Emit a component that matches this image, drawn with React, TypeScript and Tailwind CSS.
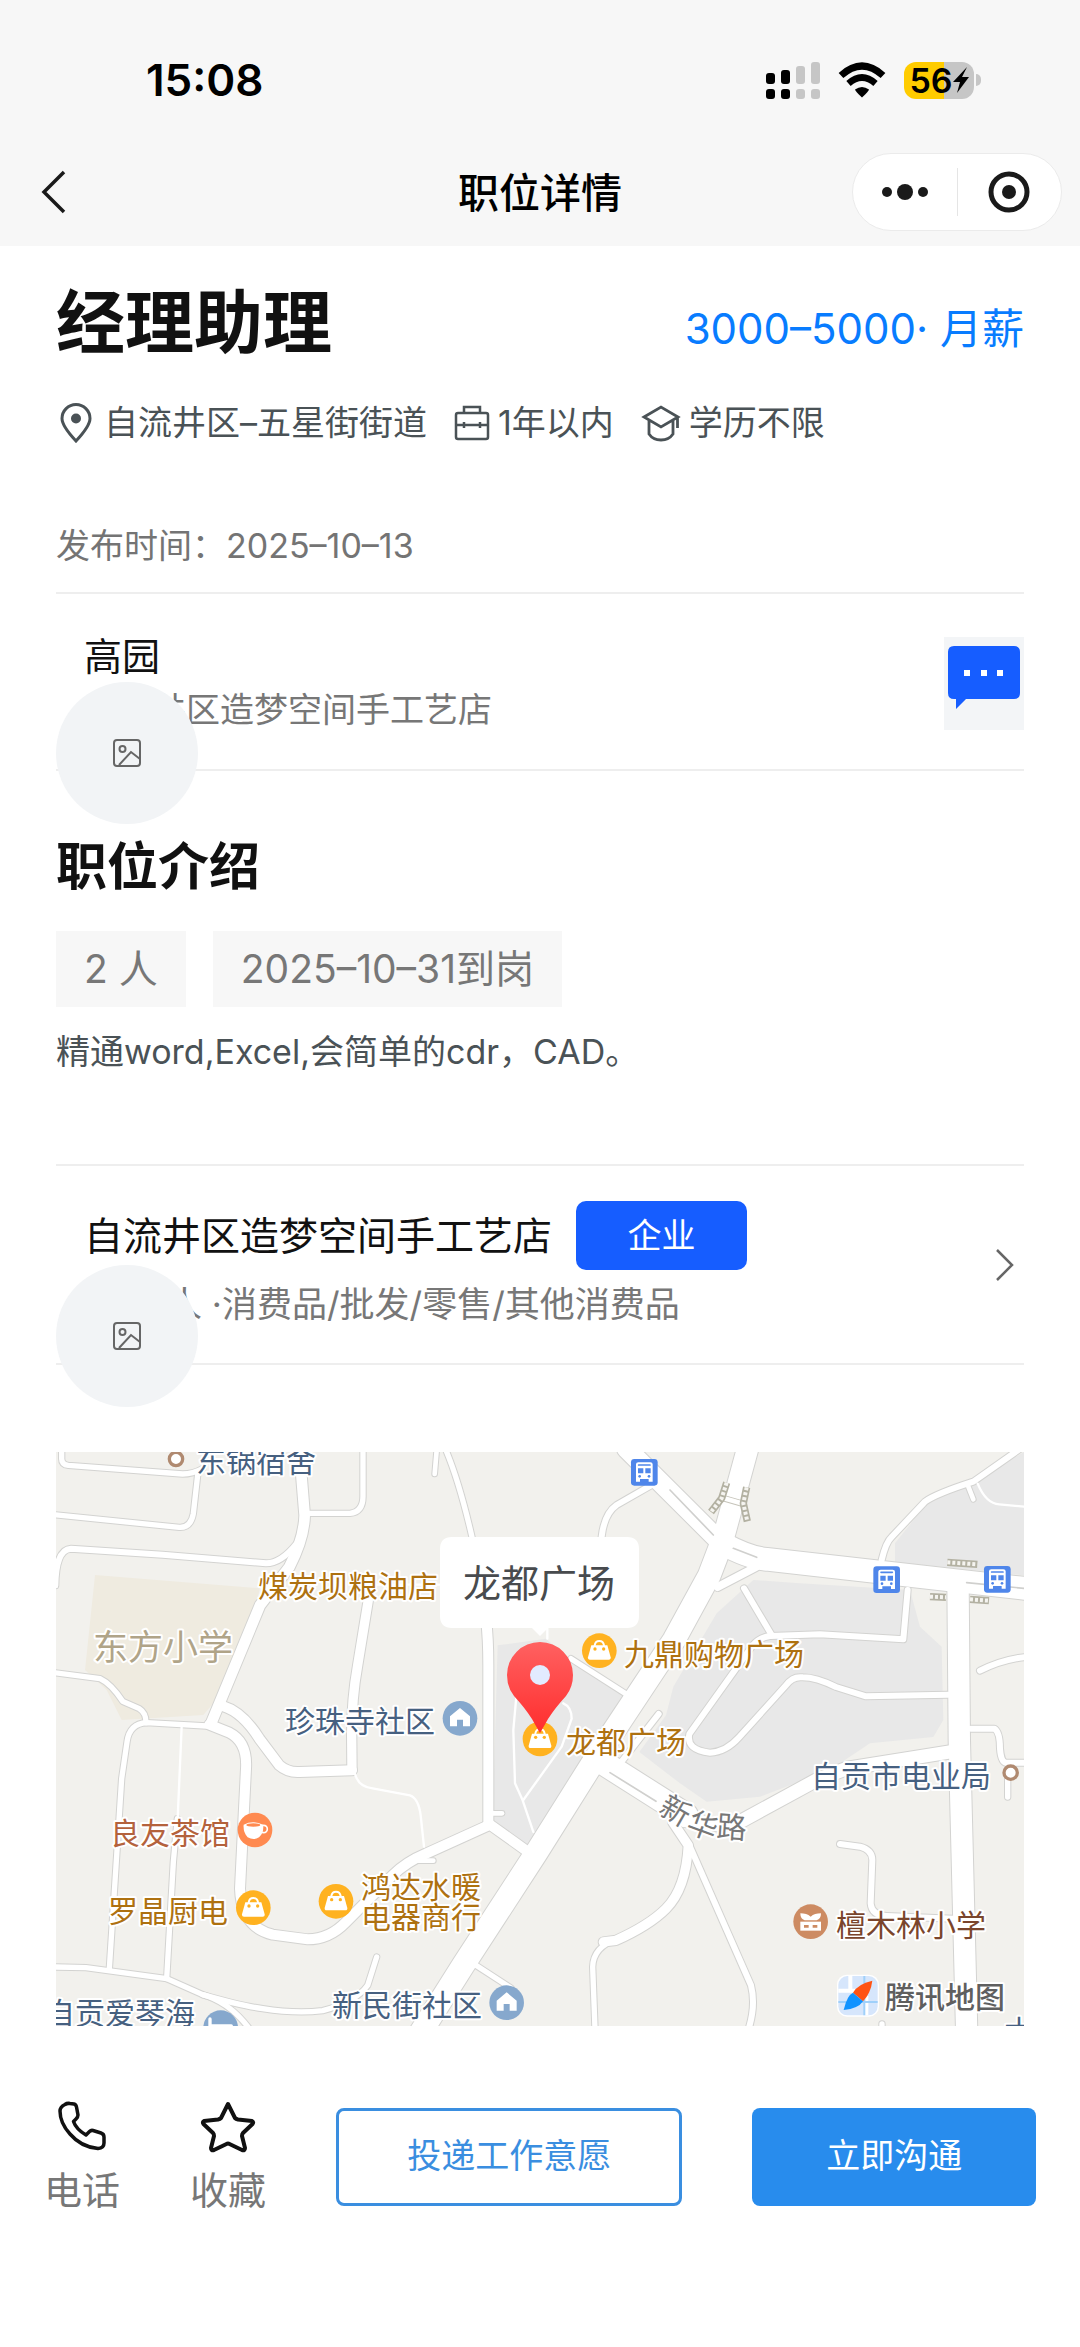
import type { ReactNode } from 'react';

type PoiKind = 'bag' | 'house' | 'tea' | 'school' | 'bed';

interface MapLabel {
  text: string;
  x: number;
  y: number;
  color: string;
  size?: number;
}

const ROADS: { d: string; width: number }[] = [
  { d: 'M17-5V20Q17 38 37 40L380 66Q410 66 440 50', width: 16 },
  { d: 'M426 60L412 185Q404 228 370 226L-5 188', width: 16 },
  { d: 'M-2 400Q0 292 45 290L320 308L630 334Q675 334 722 275', width: 18 },
  { d: 'M730-5L746 190Q744 260 700 345L612 460L465 815', width: 32 },
  { d: 'M762 184H882Q922 180 921 130V-5', width: 16 },
  { d: 'M1142-5L1136 66', width: 14 },
  { d: 'M1170-5Q1210 90 1248 255L1290 520', width: 16 },
  { d: 'M1290 500Q1297 560 1297 640V1120', width: 30 },
  { d: 'M937 444L905 640Q887 740 887 850L888 955', width: 28 },
  { d: 'M-5 662L132 680Q165 695 200 748L250 770Q270 782 270 812', width: 16 },
  { d: 'M452 822L272 812Q220 815 213 870L197 980L160 1550', width: 16 },
  { d: 'M364 1100L352 1230L332 1580', width: 16 },
  {
    d: 'M460 818L520 842Q575 870 570 950L552 1310Q556 1425 650 1448L755 1462Q820 1462 870 1410L1010 1270Q1050 1230 1110 1205L1302 1118L1410 1195',
    width: 30,
  },
  { d: 'M500 762Q560 780 610 860L670 940Q695 962 730 960L888 955', width: 30 },
  { d: 'M1302 1084H1338', width: 14 },
  { d: 'M1085 1226H1132', width: 14 },
  {
    d: 'M-5 1545L90 1547L332 1580L440 1628Q560 1662 620 1670Q720 1686 800 1676Q900 1650 935 1600L962 1515',
    width: 16,
  },
  { d: 'M440 1628Q520 1650 580 1730', width: 16 },
  { d: 'M2075-10L2000 265', width: 64 },
  { d: 'M2000 265L1960 370L1854 564L1622 914L1440 1204L1222 1539L1095 1740', width: 68 },
  { d: 'M1712-10L1985 262', width: 58 },
  { d: 'M2000 275Q2080 318 2132 322L2682 384L2915 410', width: 68 },
  { d: 'M2100 345L1985 405', width: 24 },
  { d: 'M2477 324Q2490 270 2507 255L2607 149Q2640 125 2752 89L2890-8', width: 18 },
  { d: 'M2737 104L2752 142', width: 14 },
  { d: 'M1785 100L1682 159Q1645 185 1637 254', width: 18 },
  { d: 'M2706 390L2710 865L2732 1735', width: 64 },
  { d: 'M2064 409L2147 549', width: 18 },
  {
    d: 'M2555 414L2542 562L2292 547L2142 552Q2110 556 2090 580L1900 846Q1890 895 1962 902Q2010 900 2050 855L2190 700Q2210 672 2240 676Q2280 676 2340 705L2430 733L2675 728',
    width: 18,
  },
  { d: 'M2772 656Q2840 622 2910 615', width: 18 },
  { d: 'M1545 620L1707 724', width: 16 },
  { d: 'M1808 786L1692 935', width: 18 },
  { d: 'M2745 830H2815Q2832 840 2832 890Q2835 930 2850 932H2910', width: 18 },
  { d: 'M2855 984V1035', width: 16 },
  { d: 'M1630 925L1890 1090', width: 72 },
  { d: 'M1880 1085Q1980 1140 2060 1105L2280 985L2370 950L2680 900', width: 40 },
  { d: 'M1850 1110L1897 1180Q1890 1310 1830 1370Q1780 1420 1680 1465L1642 1470', width: 28 },
  { d: 'M1682 1462Q1612 1485 1610 1545L1617 1730', width: 16 },
  { d: 'M1902 1184L2085 1600Q2100 1660 2078 1730', width: 18 },
  {
    d: 'M2352 1176L2412 1184Q2449 1194 2449 1224L2444 1354Q2447 1390 2492 1392L2692 1400',
    width: 18,
  },
  { d: 'M1260 1540L1365 1608', width: 16 },
  { d: 'M2478 1730V1716', width: 16 },
];

const FOOTPATHS = [
  'M377 824L365 1100',
  'M960 398H1150',
  'M897 965Q907 1005 950 1009L1062 1030Q1088 1040 1094 1090L1104 1184',
  'M2765 95Q2790 155 2830 157L2904 164',
  'M1474 500V560',
  'M1384 700L1372 834L1377 994L1400 1045L1432 1140',
  'M1522 754Q1547 765 1547 800L1517 884L1402 1044',
];

const FOOTBRIDGES = [
  'M2012 92L1997 139L1965 180',
  'M2072 106L2062 154L2074 208',
  'M2674 331L2764 337',
  'M2622 434L2670 436',
  'M2742 442L2799 446',
];

const POIS: { kind: PoiKind; x: number; y: number }[] = [
  { kind: 'house', x: 1212, y: 799 },
  { kind: 'house', x: 1352, y: 1652 },
  { kind: 'bed', x: 494, y: 1727 },
  { kind: 'bag', x: 1630, y: 596 },
  { kind: 'bag', x: 1452, y: 861 },
  { kind: 'bag', x: 592, y: 1367 },
  { kind: 'bag', x: 840, y: 1348 },
  { kind: 'tea', x: 597, y: 1134 },
  { kind: 'school', x: 2264, y: 1409 },
];

const POI_COLORS: Record<PoiKind, string> = {
  bag: '#ffb220',
  house: '#86a8cd',
  bed: '#86a8cd',
  tea: '#ff8a50',
  school: '#cd8b62',
};

const BUS_STOPS = [
  { x: 1765, y: 61 },
  { x: 2492, y: 383 },
  { x: 2824, y: 382 },
];

const LABELS: MapLabel[] = [
  { text: '东锅宿舍', x: 140, y: 20, color: '#466080' },
  { text: '煤炭坝粮油店', x: 202, y: 145, color: '#ae7110' },
  { text: '东方小学', x: 37, y: 208, color: '#b0a488', size: 35 },
  { text: '珍珠寺社区', x: 229, y: 280, color: '#466080' },
  { text: '九鼎购物广场', x: 568, y: 213, color: '#ae7110' },
  { text: '龙都广场', x: 510, y: 301, color: '#ae7110' },
  { text: '自贡市电业局', x: 755, y: 335, color: '#466080' },
  { text: '良友茶馆', x: 54, y: 392, color: '#b4623c' },
  { text: '罗晶厨电', x: 52, y: 470, color: '#ae7110' },
  { text: '鸿达水暖', x: 305, y: 446, color: '#ae7110' },
  { text: '电器商行', x: 305, y: 476, color: '#ae7110' },
  { text: '新民街社区', x: 276, y: 564, color: '#466080' },
  { text: '自贡爱琴海', x: -11, y: 572, color: '#466080' },
  { text: '檀木林小学', x: 780, y: 484, color: '#7a452c' },
  { text: '木', x: 948, y: 590, color: '#466080' },
];

function PoiGlyph({ kind }: { kind: PoiKind }) {
  if (kind === 'bag') {
    return (
      <>
        <path d="M-24-16H24L34 20Q35 27 28 27H-28Q-35 27-34 20Z" fill="#fff" />
        <path d="M-14-16Q-12-29 0-29T14-16" fill="none" stroke="#fff" strokeWidth="6" />
        <circle cx="-13" cy="-5" r="5" fill="#ffb220" />
        <circle cx="13" cy="-5" r="5" fill="#ffb220" />
      </>
    );
  }
  if (kind === 'house') {
    return <path d="M0-31L30-6V24H9V4H-9V24H-30V-6Z" fill="#fff" />;
  }
  if (kind === 'bed') {
    return <path d="M-32-26V20M-32-5H32V10" fill="none" stroke="#fff" strokeWidth="10" />;
  }
  if (kind === 'tea') {
    return (
      <>
        <path d="M-34-16Q-6-30 24-16Q28 8 12 22Q-4 32-22 22Q-36 8-34-16Z" fill="#fff" />
        <circle cx="26" cy="-3" r="11" fill="none" stroke="#fff" strokeWidth="5" />
        <ellipse cx="-5" cy="-15" rx="21" ry="5" fill="#ff8a50" />
      </>
    );
  }
  return (
    <>
      <path d="M-31-25Q-12-25 0-15Q12-25 31-25Q31-8 18-4H-18Q-31-8-31-25Z" fill="#fff" />
      <path d="M-31 0H31V27H-31Z" fill="#fff" />
      <path d="M-20 10H-6V18H-20ZM6 10H20V18H6Z" fill="#cd8b62" />
    </>
  );
}

function LocationMap() {
  return (
    <svg viewBox="0 0 968 574" role="img" aria-label="龙都广场" className="mt-[87px] block w-full">
      <defs>
        <linearGradient id="pin-fill" x1="0" y1="0" x2="0" y2="1">
          <stop offset="0" stopColor="#ff6161" />
          <stop offset="1" stopColor="#ff2d2d" />
        </linearGradient>
      </defs>
      <rect width="968" height="574" fill="#f2f1ed" />

      <g transform="scale(.33333)" strokeLinecap="round" strokeLinejoin="round" fill="none">
        <path d="M117 369L612 409L592 484L472 754L442 789L197 804L152 714L87 654Z" fill="#efebe0" />
        <g fill="#e8e8e8">
          <path d="M1325 580L1470 560L1545 625L1705 735L1600 900L1435 1150L1410 1190L1310 1100Z" />
          <path d="M1982 484L2092 384L2232 394L2562 414L2592 524L2657 584L2662 804L2632 855L2442 874L2322 954L2112 1034L1952 1049L1872 994L1750 900L1830 790L1852 704Z" />
          <path d="M2517 274L2612 154L2752 89L2904 0V370L2517 330Z" />
        </g>
        {ROADS.map(({ d, width }) => (
          <path key={d} d={d} stroke="#d3d3d1" strokeWidth={width + 6} />
        ))}
        {FOOTPATHS.map((d) => (
          <path key={d} d={d} stroke="#fff" strokeWidth="7" />
        ))}
        {ROADS.map(({ d, width }) => (
          <path key={d} d={d} stroke="#fff" strokeWidth={width} />
        ))}
        <path
          d="M1842 114L1972 249M2032 289L2102 316M2732 392L2904 409M1662 962L1800 1048"
          stroke="#d0d0ce"
          strokeWidth="5"
        />
        <path d="M2004 139L2056 154" stroke="#c6c4ba" strokeWidth="20" />
        <path d="M2004 139L2056 154" stroke="#fff" strokeWidth="14" />
        <g strokeLinecap="butt">
          {FOOTBRIDGES.map((d) => (
            <path key={d} d={d} stroke="#b3b1a2" strokeWidth="22" />
          ))}
          {FOOTBRIDGES.map((d) => (
            <path key={d} d={d} stroke="#f5f4f0" strokeWidth="12" strokeDasharray="9 6" />
          ))}
        </g>

        <g fill="#fff" stroke="#b08a70" strokeWidth="10">
          <circle cx="360" cy="21" r="20" />
          <circle cx="2864" cy="962" r="20" />
        </g>
        {BUS_STOPS.map(({ x, y }) => (
          <g key={x} transform={`translate(${x} ${y})`}>
            <rect x="-40" y="-40" width="80" height="80" rx="10" fill="#4f86ea" />
            <path
              d="M-25 28V-24Q-25-30-18-30H18Q25-30 25-24V28H13V20H-13V28Z"
              fill="#fff"
            />
            <path d="M-17-22H17" stroke="#4f86ea" strokeWidth="5" />
            <path d="M-19-12H-3V3H-19ZM3-12H19V3H3Z" fill="#4f86ea" />
            <circle cx="-14" cy="12" r="4" fill="#4f86ea" />
            <circle cx="14" cy="12" r="4" fill="#4f86ea" />
          </g>
        ))}
        {POIS.map(({ kind, x, y }) => (
          <g key={`${x}-${y}`} transform={`translate(${x} ${y})`}>
            <circle r="52" fill={POI_COLORS[kind]} />
            <PoiGlyph kind={kind} />
          </g>
        ))}

        <g transform="translate(2347 1572)">
          <rect x="-4" y="-4" width="126" height="126" rx="30" fill="#fff" />
          <rect width="118" height="118" rx="27" fill="#d6e6fc" />
          <path d="M36 0V50M0 44H60M84 60V118" stroke="#fff" strokeWidth="12" strokeLinecap="butt" />
          <path d="M78 0V118M0 78H118" stroke="#9fd0fa" strokeWidth="6" strokeLinecap="butt" />
          <path d="M102 14Q58 24 44 50L74 76Q98 50 102 14Z" fill="#ff5314" />
          <path d="M16 102Q26 58 44 50L74 76Q60 98 16 102Z" fill="#1193ff" />
        </g>
      </g>

      <g
        stroke="#fff"
        strokeWidth="4"
        strokeLinejoin="round"
        paintOrder="stroke"
        fontSize="30"
      >
        {LABELS.map(({ text, x, y, color, size }) => (
          <text key={text} x={x} y={y} fill={color} fontSize={size}>
            {text}
          </text>
        ))}
        <g fill="#777" textAnchor="middle">
          <text transform="translate(614 368) rotate(30)">新</text>
          <text transform="translate(643 384) rotate(20)">华</text>
          <text transform="translate(675 386) rotate(4)">路</text>
        </g>
        <text x="829" y="556" fill="#5f5f5f" fontWeight="500">
          腾讯地图
        </text>
      </g>

      <path
        d="M396 85H571Q583 85 583 97V164Q583 176 571 176H492L484 184L476 176H396Q384 176 384 164V97Q384 85 396 85Z"
        fill="#fff"
      />
      <text x="483" y="145" textAnchor="middle" fontSize="38" fill="#484b4e">
        龙都广场
      </text>
      <path
        d="M484 281Q481 276 476 267Q469 256 458 244Q451 235 451 223A33 33 0 0 1 517 223Q517 235 510 244Q499 256 492 267Q487 276 484 281Z"
        fill="url(#pin-fill)"
      />
      <circle cx="484" cy="223" r="10" fill="#e2ebff" />
    </svg>
  );
}

function StatusBar() {
  return (
    <div className="flex h-[138px] items-center justify-between pt-[22px] pr-[99px] pl-[146px]">
      <span className="text-[44px] leading-[50px] font-semibold text-black">15:08</span>
      <div className="flex items-center gap-[18px]">
        <svg viewBox="0 0 54 38" className="h-[38px] w-[54px]" aria-hidden="true">
          <g fill="#000">
            <rect y="12" width="9" height="11" rx="3" />
            <rect x="15" y="9" width="9" height="14" rx="3" />
            <rect y="28" width="9" height="10" rx="3" />
            <rect x="15" y="28" width="9" height="10" rx="3" />
          </g>
          <g fill="#c6c6c6">
            <rect x="30" y="5" width="9" height="18" rx="3" />
            <rect x="45" y="1" width="9" height="22" rx="3" />
            <rect x="30" y="28" width="9" height="10" rx="3" />
            <rect x="45" y="28" width="9" height="10" rx="3" />
          </g>
        </svg>
        <svg viewBox="0 0 48 36" className="h-[36px] w-[48px]" aria-hidden="true">
          <path d="M3 13.500Q24-5.500 45 13.500" fill="none" stroke="#000" strokeWidth="7" />
          <path d="M10.500 21.500Q24 9.500 37.500 21.500" fill="none" stroke="#000" strokeWidth="6.500" />
          <path d="M17 27.500Q24 22.500 31 27.500Q31 29 24 35.500Q17 29 17 27.500Z" fill="#000" />
        </svg>
        <div className="flex items-center gap-[2px]">
          <div className="flex h-[37px] w-[70px] items-center justify-center rounded-[12px] bg-linear-to-r from-[#ffcc00] from-57% to-[#c6c6c6] to-57%">
            <span className="text-[34px] leading-[37px] font-semibold text-black">56</span>
            <svg viewBox="0 0 16 26" className="h-[26px] w-[16px]" aria-hidden="true">
              <path d="M14 0L0 15H7L4 26L16 10H9Z" fill="#000" />
            </svg>
          </div>
          <div className="h-[12px] w-[5px] rounded-r-full bg-[#c6c6c6]" />
        </div>
      </div>
    </div>
  );
}

function NavBar() {
  return (
    <nav className="grid h-[108px] grid-cols-[1fr_auto_1fr] items-center px-[18px]">
      <button type="button" aria-label="返回" className="justify-self-start pl-[22px]">
        <svg viewBox="0 0 26 44" className="h-[44px] w-[26px]" fill="none" aria-hidden="true">
          <path d="M24 2L4 22L24 42" stroke="#1a1a1a" strokeWidth="3.500" />
        </svg>
      </button>
      <h1 className="pt-[2px] text-[41px] leading-[50px] font-medium text-black">职位详情</h1>
      <div className="flex h-[78px] w-[210px] items-center justify-self-end rounded-full border border-[#ebebeb] bg-white">
        <button type="button" aria-label="更多" className="flex flex-1 justify-center">
          <svg viewBox="0 0 46 18" className="h-[18px] w-[46px]" fill="#1a1a1a" aria-hidden="true">
            <circle cx="5" cy="9" r="5" />
            <circle cx="23" cy="9" r="8" />
            <circle cx="41" cy="9" r="5" />
          </svg>
        </button>
        <div className="h-12 w-px bg-[#e5e5e5]" />
        <button type="button" aria-label="关闭" className="flex flex-1 justify-center">
          <svg viewBox="0 0 42 42" className="size-[42px]" aria-hidden="true">
            <circle cx="21" cy="21" r="18" fill="none" stroke="#1a1a1a" strokeWidth="5" />
            <circle cx="21" cy="21" r="7" fill="#1a1a1a" />
          </svg>
        </button>
      </div>
    </nav>
  );
}

// The avatar hangs over the section's bottom border and hides part of the text behind it.
function AvatarPlaceholder({ className }: { className: string }) {
  return (
    <div
      className={`absolute left-0 flex size-[142px] items-center justify-center rounded-full bg-[#f2f4f6] ${className}`}
    >
      <svg viewBox="0 0 28 28" className="size-[28px]" fill="none" stroke="#666" strokeWidth="2" aria-hidden="true">
        <rect x="1" y="1" width="26" height="26" rx="3" />
        <circle cx="9.500" cy="10" r="3" />
        <path d="M6 26L18 13L27 20" />
      </svg>
    </div>
  );
}

function MetaItem({ icon, children }: { icon: ReactNode; children: ReactNode }) {
  return (
    <li className="flex items-center gap-2">
      {icon}
      <span>{children}</span>
    </li>
  );
}

function JobSummary() {
  return (
    <section className="border-b-2 border-[#eeeeee] pt-9 pb-[21px]">
      <div className="flex items-end justify-between">
        <h2 className="text-[69px] leading-[82px] font-bold text-[#111]">经理助理</h2>
        <p className="text-[42px] leading-[70px] text-[#087cff]">3000–5000· 月薪</p>
      </div>
      <ul className="mt-[34px] flex gap-[27px] text-[34px] leading-[50px] text-[#4a5256]">
        <MetaItem
          icon={
            <svg viewBox="0 0 40 40" className="size-10" fill="none" stroke="currentColor" strokeWidth="3" aria-hidden="true">
              <path d="M20 38Q6 23 6 15.500A14 14 0 0 1 34 15.500Q34 23 20 38Z" />
              <circle cx="20" cy="15.500" r="5" fill="currentColor" stroke="none" />
            </svg>
          }
        >
          自流井区–五星街街道
        </MetaItem>
        <MetaItem
          icon={
            <svg viewBox="0 0 36 36" className="size-9" fill="none" stroke="currentColor" strokeWidth="2.500" aria-hidden="true">
              <rect x="2" y="8" width="32" height="26" rx="2" />
              <path d="M10 8V2H26V8M2 20H34M10 17V23M26 17V23" />
            </svg>
          }
        >
          1年以内
        </MetaItem>
        <MetaItem
          icon={
            <svg viewBox="0 0 40 40" className="size-10" fill="none" stroke="currentColor" strokeWidth="2.800" aria-hidden="true">
              <path d="M3 14L20 4L37 14L20 24ZM8 17V31Q12 37 20 37T32 31V17M36.500 14V25" />
            </svg>
          }
        >
          学历不限
        </MetaItem>
      </ul>
      <p className="mt-[73px] text-[34px] leading-[50px] text-[#747474]">发布时间：2025–10–13</p>
    </section>
  );
}

function Recruiter() {
  return (
    <section className="relative flex items-center justify-between border-b-2 border-[#eeeeee] pt-[37px] pb-[34px] pl-7">
      <div>
        <h3 className="text-[38px] leading-[50px] text-[#111]">高园</h3>
        <p className="mt-1 text-[34px] leading-[50px] text-[#777]">自流井区造梦空间手工艺店</p>
      </div>
      <button type="button" aria-label="发消息" className="-my-4 bg-[#f3f5f7]">
        <svg viewBox="0 0 80 93" className="h-[93px] w-[80px]" aria-hidden="true">
          <path
            d="M10 9H70Q76 9 76 15V56Q76 62 70 62H22L12 72V62H10Q4 62 4 56V15Q4 9 10 9Z"
            fill="#165dff"
          />
          <path d="M20 33H26V39H20ZM37 33H43V39H37ZM53 33H59V39H53Z" fill="#fff" />
        </svg>
      </button>
      <AvatarPlaceholder className="top-[88px]" />
    </section>
  );
}

function JobIntro() {
  return (
    <section className="border-b-2 border-[#eeeeee] pt-16 pb-[87px]">
      <h2 className="text-[51px] leading-[64px] font-bold text-[#111]">职位介绍</h2>
      <ul className="mt-8 flex gap-[27px] text-[39px] leading-[76px] text-[#777]">
        <li className="bg-[#f7f7f7] px-7">2 人</li>
        <li className="bg-[#f7f7f7] px-7">2025–10–31到岗</li>
      </ul>
      <p className="mt-5 text-[34px] leading-[50px] text-[#4a5256]">精通word,Excel,会简单的cdr，CAD。</p>
    </section>
  );
}

function Company() {
  return (
    <section className="relative flex items-center justify-between border-b-2 border-[#eeeeee] pt-[35px] pb-[34px] pl-7">
      <div>
        <div className="flex items-center gap-6">
          <h3 className="text-[39px] leading-[50px] text-[#111]">自流井区造梦空间手工艺店</h3>
          <span className="w-[171px] rounded-[10px] bg-[#165dff] text-center text-[34px] leading-[69px] text-white">
            企业
          </span>
        </div>
        <p className="mt-[9px] text-[35px] leading-[50px] text-[#777]">0–20人 ·消费品/批发/零售/其他消费品</p>
      </div>
      <a href="#company" aria-label="查看企业" className="pr-[10px]">
        <svg viewBox="0 0 20 32" className="h-[32px] w-[20px]" fill="none" aria-hidden="true">
          <path d="M3 1L18 16L3 31" stroke="#666" strokeWidth="2.500" />
        </svg>
      </a>
      <AvatarPlaceholder className="top-[99px]" />
    </section>
  );
}

function ActionBar() {
  return (
    <footer className="flex items-center gap-[70px] px-11 pt-[75px] pb-[134px] text-[34px]">
      <button type="button" className="flex flex-col items-center text-[38px] leading-[46px] text-[#777]">
        <svg viewBox="0 0 52 52" className="mb-[14px] size-[52px]" fill="none" stroke="#111" strokeWidth="3.500" strokeLinejoin="round" aria-hidden="true">
          <path d="M9 3.500Q11 2 14 2.500L18 3Q20 3.500 20.500 6L22 14Q22 16 20 18L17.500 20.500Q20 28 30 34L33.500 30.500Q35 29 37 29.500L45 32Q48 33 48 36V42Q48 47 42 47.500Q25 46 14 33Q4 22 4 10Q4 6 9 3.500Z" />
        </svg>
        电话
      </button>
      <button type="button" className="flex flex-col items-center text-[38px] leading-[46px] text-[#777]">
        <svg viewBox="0 0 56 52" className="mb-[14px] h-[52px] w-[56px]" fill="none" stroke="#111" strokeWidth="4" strokeLinejoin="round" aria-hidden="true">
          <path d="M28 3L35 17Q36 18 38 18.500L52 20Q54 21 52.500 23L43 32Q42 33 42 35L45 47Q45 50 42 49L29.500 43Q28 42 26.500 43L14 49Q11 50 11 47L14 35Q14 33 13 32L3.500 23Q2 21 4 20L18 18.500Q20 18 21 17Z" />
        </svg>
        收藏
      </button>
      <button
        type="button"
        className="h-[98px] flex-6 rounded-lg border-[3px] border-[#3a8ee0] bg-white pb-1 text-[#3a8ee0]"
      >
        投递工作意愿
      </button>
      <button type="button" className="h-[98px] flex-5 rounded-lg bg-[#288ced] pb-1 text-white">
        立即沟通
      </button>
    </footer>
  );
}

export default function App() {
  return (
    <div className="bg-white font-[Inter,'Noto_Sans_CJK_SC',sans-serif]" lang="zh-CN">
      <header className="bg-[#f7f7f7]">
        <StatusBar />
        <NavBar />
      </header>
      <main className="px-14">
        <JobSummary />
        <Recruiter />
        <JobIntro />
        <Company />
        <LocationMap />
      </main>
      <ActionBar />
    </div>
  );
}
